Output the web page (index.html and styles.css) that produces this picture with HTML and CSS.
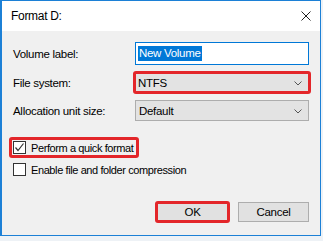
FILE: index.html
```html
<!DOCTYPE html>
<html lang="en">
<head>
    <meta charset="UTF-8">
    <title>Format D:</title>
    <link rel="stylesheet" href="styles.css">
</head>
<body>
    <div class="dialog">
        <div class="titlebar">
            <span class="title">Format D:</span>
            <svg class="close" viewBox="0 0 10 10" width="10" height="10">
                <path d="M0.5,0.5 L9.5,9.5 M9.5,0.5 L0.5,9.5" stroke="#222" stroke-width="1" fill="none"/>
            </svg>
        </div>

        <div class="content">
            <div class="fields">
                <label class="field-label">Volume label:</label>
                <div class="textbox"><span class="selected">New Volume</span></div>

                <label class="field-label">File system:</label>
                <div class="combo marked">
                    <span>NTFS</span>
                    <svg class="chevron" viewBox="0 0 8 5" width="8" height="5"><path d="M0.5,0.5 L4,4 L7.5,0.5" stroke="#555" fill="none"/></svg>
                </div>

                <label class="field-label">Allocation unit size:</label>
                <div class="combo">
                    <span>Default</span>
                    <svg class="chevron" viewBox="0 0 8 5" width="8" height="5"><path d="M0.5,0.5 L4,4 L7.5,0.5" stroke="#555" fill="none"/></svg>
                </div>
            </div>

            <div class="check-row marked">
                <span class="checkbox">
                    <svg viewBox="0 0 11 11" width="11" height="11"><path d="M1.5,5.5 L4,8.5 L9.5,1.5" stroke="#333" stroke-width="1.2" fill="none"/></svg>
                </span>
                <span>Perform a quick format</span>
            </div>
            <div class="check-row second">
                <span class="checkbox"></span>
                <span>Enable file and folder compression</span>
            </div>

            <div class="buttons">
                <div class="button-mark"><button class="btn ok">OK</button></div>
                <button class="btn">Cancel</button>
            </div>
        </div>
    </div>
</body>
</html>
```

FILE: styles.css
```css
body {
    margin: 0;
    background-color: #eef2f6;
    font-family: "Liberation Sans", Arial, sans-serif;
    font-size: 11.5px;
    letter-spacing: -0.3px;
    color: #000;
}
.dialog {
    box-sizing: border-box;
    width: 321px;
    height: 236px;
    border: 1px solid #1c80d6;
    border-left-width: 2px;
    background: #f0f0f0;
    display: flex;
    flex-direction: column;
}
.titlebar {
    height: 30px;
    background: #fff;
    display: flex;
    align-items: center;
    justify-content: space-between;
    padding: 0 9px 0 9px;
}
.title {
    font-size: 12px;
}
.close {
    margin-top: -1px;
}
.content {
    display: flex;
    flex-direction: column;
    padding: 11px 10px 0 11px;
}
.fields {
    display: grid;
    grid-template-columns: 122px 174px;
    grid-template-rows: 23px 23px 21px;
    row-gap: 6px;
    align-items: center;
}
.textbox {
    box-sizing: border-box;
    height: 23px;
    border: 1px solid #0078d7;
    background: #fff;
    display: flex;
    align-items: center;
    padding-left: 2px;
}
.selected {
    background: #0078d7;
    color: #fff;
    line-height: 15px;
    padding: 0 1px;
}
.combo {
    box-sizing: border-box;
    height: 21px;
    border: 1px solid #adadad;
    background: #e3e3e3;
    display: flex;
    align-items: center;
    justify-content: space-between;
    padding: 0 6px 0 3px;
}
.combo.marked {
    height: 23px;
    margin: 0 -2px;
    border: 3px solid #e3262a;
    border-radius: 3px;
    padding: 0 6px 0 2px;
}
.chevron {
    margin-top: 1px;
}
.check-row {
    display: flex;
    align-items: center;
    gap: 5px;
    height: 13px;
    font-size: 11px;
    letter-spacing: -0.4px;
}
.check-row.marked {
    box-sizing: border-box;
    align-self: flex-start;
    height: 21px;
    margin: 16px 0 0 -4px;
    padding: 0 3px 0 1px;
    border: 3px solid #e3262a;
    border-radius: 3px;
}
.check-row.second {
    margin-top: 5px;
}
.checkbox {
    box-sizing: border-box;
    width: 13px;
    height: 13px;
    border: 1px solid #333;
    background: #fff;
    display: flex;
    align-items: center;
    justify-content: center;
}
.buttons {
    display: flex;
    justify-content: flex-end;
    align-items: center;
    gap: 8px;
    margin-top: 25px;
    padding-right: 1px;
}
.button-mark {
    box-sizing: border-box;
    width: 75px;
    height: 22px;
    border: 3px solid #e3262a;
    border-radius: 3px;
    display: flex;
}
.btn {
    box-sizing: border-box;
    width: 71px;
    height: 20px;
    border: 1px solid #adadad;
    background: #e1e1e1;
    font-family: "Liberation Sans", Arial, sans-serif;
    font-size: 11.5px;
    letter-spacing: -0.3px;
    color: #000;
    padding: 0;
}
.btn.ok {
    width: 100%;
    height: 100%;
    border: none;
    background: #e1e1e1;
}
```
